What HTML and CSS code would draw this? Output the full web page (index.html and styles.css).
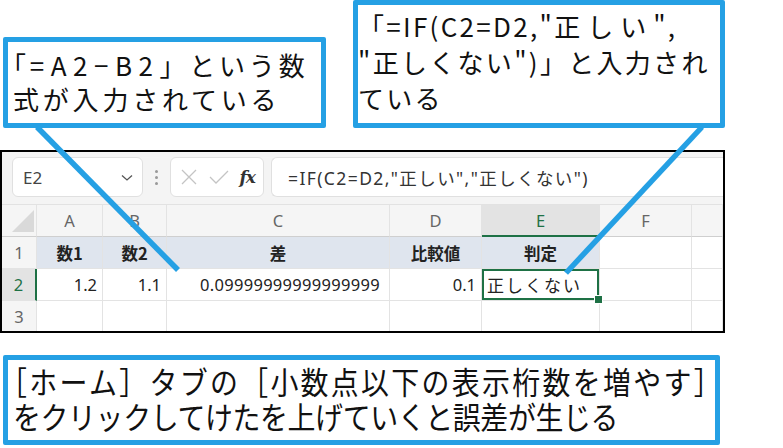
FILE: index.html
```html
<!DOCTYPE html>
<html lang="ja">
<head>
<meta charset="utf-8">
<link rel="stylesheet" href="styles.css">
</head>
<body>
<div class="page">
  <div class="top">
    <div class="callout c1">
      <p><span class="half">「</span><span class="lat">=A2−B2</span>」という数<br>式が入力されている</p>
    </div>
    <div class="callout c2">
      <p>「=IF(C2=D2,"<span class="wide">正しい</span>",<br>"正しくない")」と入力され<br>ている</p>
    </div>
  </div>

  <div class="sheet">
    <div class="toolbar">
      <div class="namebox">
        <span class="ref">E2</span>
        <svg class="chev" width="12" height="8" viewBox="0 0 12 8"><path d="M1 1.5 L6 6 L11 1.5" fill="none" stroke="#555" stroke-width="1.3"/></svg>
      </div>
      <div class="dots"><span></span><span></span><span></span></div>
      <div class="fxbox">
        <svg width="20" height="20" viewBox="0 0 20 20"><path d="M3 3 L17 17 M17 3 L3 17" stroke="#c4c4c4" stroke-width="1.3" fill="none"/></svg>
        <svg width="22" height="20" viewBox="0 0 22 20"><path d="M2 10 L8 16 L20 4" stroke="#c4c4c4" stroke-width="1.3" fill="none"/></svg>
        <span class="fx">fx</span>
      </div>
      <div class="formula">=IF(C2=D2,"正しい","正しくない")</div>
    </div>
    <div class="grid">
      <div class="corner"><svg width="22" height="22" viewBox="0 0 22 22"><path d="M22 0 L22 22 L0 22 Z" fill="#d9d9d9"/></svg></div>
      <div class="ch">A</div>
      <div class="ch">B</div>
      <div class="ch">C</div>
      <div class="ch">D</div>
      <div class="ch sel">E</div>
      <div class="ch">F</div>
      <div class="ch blank"></div>

      <div class="rh">1</div>
      <div class="c hd">数1</div>
      <div class="c hd">数2</div>
      <div class="c hd">差</div>
      <div class="c hd">比較値</div>
      <div class="c hd">判定</div>
      <div class="c"></div>
      <div class="c"></div>

      <div class="rh rsel">2</div>
      <div class="c num">1.2</div>
      <div class="c num">1.1</div>
      <div class="c num numc">0.09999999999999999</div>
      <div class="c num">0.1</div>
      <div class="c active">正しくない</div>
      <div class="c"></div>
      <div class="c"></div>

      <div class="rh">3</div>
      <div class="c"></div>
      <div class="c"></div>
      <div class="c"></div>
      <div class="c"></div>
      <div class="c"></div>
      <div class="c"></div>
      <div class="c"></div>
    </div>
  </div>

  <div class="callout c3">
    <p class="line l1"><span class="half">［</span>ホーム］タブの［小数点以下の表示桁数を増やす］</p>
    <p class="line l2">をクリックしてけたを上げていくと誤差が生じる</p>
  </div>

  <svg class="leaders" width="783" height="448" viewBox="0 0 783 448">
    <line x1="37" y1="127" x2="178" y2="270" stroke="#25a0e4" stroke-width="5.5"/>
    <line x1="702" y1="127" x2="566" y2="273" stroke="#25a0e4" stroke-width="5.5"/>
  </svg>
</div>
</body>
</html>
```

FILE: styles.css
```css
* { box-sizing: border-box; }
html, body { margin: 0; padding: 0; background: #fff; }
body { width: 783px; height: 448px; overflow: hidden; }
.page {
  position: relative;
  width: 783px;
  height: 448px;
  font-family: "Noto Sans CJK JP", "Noto Sans", sans-serif;
  color: #111;
}
p { margin: 0; }
.half { font-feature-settings: "halt" 1; }

.top {
  display: flex;
  align-items: flex-end;
  height: 150px;
  padding-bottom: 22px;
}
.callout {
  border: 5.5px solid #25a0e4;
  border-radius: 2px;
  background: #fff;
}
.c1 {
  margin-left: 3px;
  width: 323px;
  height: 91px;
  padding: 6px 0 0 5px;
  font-size: 26px;
  line-height: 34px;
  letter-spacing: 3.8px;
  white-space: nowrap;
}
.lat { letter-spacing: 6.5px; }
.c2 {
  margin-left: 27px;
  width: 372px;
  height: 128px;
  padding: 3px 0 0 0;
  font-size: 26px;
  line-height: 36px;
  letter-spacing: 2.3px;
  white-space: nowrap;
}
.wide { letter-spacing: 7px; }

/* spreadsheet */
.sheet {
  width: 725px;
  height: 183px;
  border: 2px solid #000;
  background: #fff;
  overflow: hidden;
  font-family: "Noto Sans", "Noto Sans CJK JP", sans-serif;
}
.toolbar {
  height: 53px;
  background: #f4f4f4;
  display: flex;
  align-items: flex-start;
  padding-top: 5px;
  border-bottom: 1px solid #e2e2e2;
}
.namebox, .fxbox, .formula {
  height: 40px;
  background: #fff;
  border: 1px solid #e0e0e0;
  border-radius: 6px;
}
.namebox {
  margin-left: 10px;
  width: 131px;
  display: flex;
  align-items: center;
  justify-content: space-between;
  padding: 0 9px 0 10px;
}
.ref { font-size: 17px; color: #444; }
.chev { margin-top: 2px; }
.dots {
  width: 27px;
  height: 40px;
  display: flex;
  flex-direction: column;
  align-items: center;
  justify-content: center;
  gap: 3px;
}
.dots span { width: 3px; height: 3px; border-radius: 50%; background: #999; }
.fxbox {
  width: 94px;
  display: flex;
  align-items: center;
  justify-content: space-between;
  padding: 0 8px 0 8px;
}
.fx {
  font-family: "DejaVu Serif", "Liberation Serif", serif;
  font-style: italic;
  font-size: 17px;
  color: #333;
  font-weight: bold;
  letter-spacing: -1px;
}
.formula {
  margin-left: 7px;
  flex: 1;
  border-right: none;
  border-radius: 6px 0 0 6px;
  font-size: 17.5px;
  color: #333;
  display: flex;
  align-items: center;
  padding-left: 16px;
  font-family: "Noto Sans", "Noto Sans CJK JP", sans-serif;
  letter-spacing: 1.4px;
}

.grid {
  display: grid;
  grid-template-columns: 35px 66px 64px 223px 92px 118px 92px 1fr;
  grid-template-rows: 32px 32px 32px 32px;
  font-size: 16.5px;
}
.grid > div {
  border-right: 1px solid #e3e3e3;
  border-bottom: 1px solid #e3e3e3;
}
.corner {
  background: #f5f5f5;
  display: flex;
  align-items: flex-end;
  justify-content: flex-end;
  padding: 0 2px 4px 0;
  border-bottom: 1px solid #cfcfcf !important;
}
.ch {
  background: #f5f5f5;
  color: #666;
  display: flex;
  align-items: center;
  justify-content: center;
  border-bottom: 1px solid #cfcfcf !important;
}
.ch.sel {
  background: #e3e3e3;
  color: #1e7145;
  border-bottom: 2px solid #1e7145 !important;
}
.rh {
  background: #f5f5f5;
  color: #666;
  display: flex;
  align-items: center;
  justify-content: center;
}
.rh.rsel {
  background: #e3e3e3;
  color: #1e7145;
  border-right: 2px solid #1e7145 !important;
}
.c {
  display: flex;
  align-items: center;
  padding: 0 5px;
  color: #222;
}
.hd {
  background: #dfe5ee;
  font-weight: bold;
  justify-content: center;
  font-family: "Noto Sans CJK JP", sans-serif;
}
.num { justify-content: flex-end; }
.numc { padding-right: 9px; letter-spacing: 0.3px; }
.active {
  position: relative;
  box-shadow: inset 0 0 0 2px #1e7145;
  font-family: "Noto Sans CJK JP", sans-serif;
  letter-spacing: 2px;
  padding-left: 5px;
  font-size: 17px;
}
.active::after {
  content: "";
  position: absolute;
  right: -4px;
  bottom: -4px;
  width: 7px;
  height: 7px;
  background: #1e7145;
  border: 1px solid #fff;
}

.c3 {
  margin: 22px 0 0 3px;
  width: 717px;
  height: 90px;
  padding: 3px 0 0 5px;
  font-size: 31px;
  line-height: 35px;
}
.line {
  white-space: nowrap;
  transform: scaleX(0.9);
  transform-origin: left center;
}
.l1 { letter-spacing: 2.6px; }
.l2 { letter-spacing: -0.4px; }

.leaders {
  position: absolute;
  left: 0;
  top: 0;
  pointer-events: none;
}
```
